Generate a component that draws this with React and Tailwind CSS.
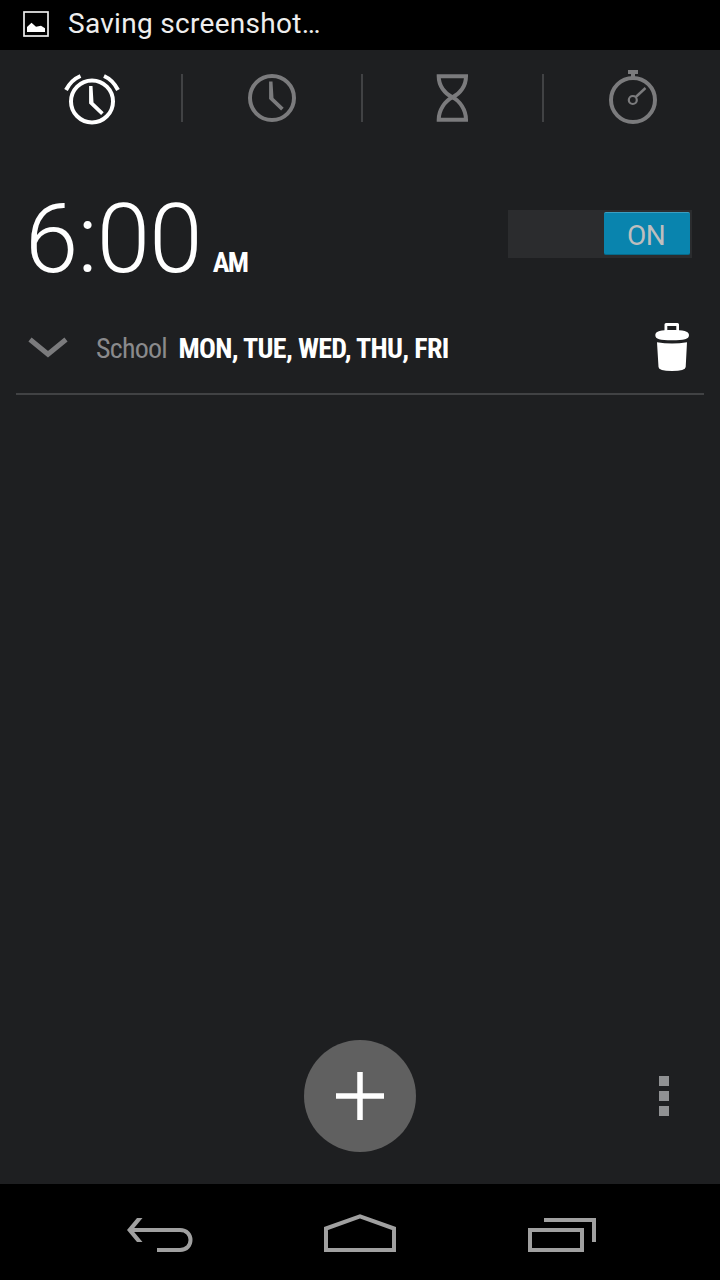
import React from 'react';

function ClockHands({ cx, cy }) {
  return (
    <path d={`M${cx - 2.4} ${cy - 15.5}h3.4l1 16.500 10.200 9.800-2.600 2.600-12-11.400z`} fill="currentColor" stroke="none" />
  );
}

function AlarmIcon() {
  return (
    <svg width="61" height="56" viewBox="60 70 61 56" fill="none" stroke="currentColor" strokeWidth="4">
      <circle cx="92" cy="101.400" r="21" />
      <path d="M66 90Q71 80 80.500 76M118 90Q113 80 104 76" />
      <ClockHands cx={91.5} cy={101.5} />
    </svg>
  );
}

function ClockIcon() {
  return (
    <svg width="50" height="56" viewBox="247 70 50 56" fill="none" stroke="currentColor" strokeWidth="4">
      <circle cx="272" cy="98" r="22" />
      <ClockHands cx={271.5} cy={97} />
    </svg>
  );
}

function HourglassIcon() {
  return (
    <svg width="37" height="56" viewBox="434 70 37 56" fill="none" stroke="currentColor" strokeWidth="4">
      <path d="M438.700 76.200H466C466 86 460 94 452.400 97.300C445 94 438.700 86 438.700 76.200ZM438.700 119.700H466C466 110 460 101 452.400 97.300C445 101 438.700 110 438.700 119.700Z" />
    </svg>
  );
}

function StopwatchIcon() {
  return (
    <svg width="52" height="56" viewBox="606 70 52 56" fill="none" stroke="currentColor" strokeWidth="4">
      <circle cx="633" cy="100" r="22" />
      <path d="M628 70h10v4h-3v3h-4v-3h-3z" fill="currentColor" stroke="none" />
      <circle cx="632.800" cy="100" r="4" strokeWidth="2.200" />
      <path d="M635.800 97L645.500 88" strokeWidth="2.400" />
    </svg>
  );
}

function Tab({ className, children }) {
  return <button className={`flex h-24 items-center justify-center ${className}`}>{children}</button>;
}

function Divider() {
  return <div className="h-12 w-0.5 shrink-0 bg-[#414244]" />;
}

export default function App() {
  return (
    <div className="flex h-[1280px] w-[720px] flex-col overflow-hidden bg-[#1e1f21] font-['Roboto',sans-serif] text-white">
      <header className="flex h-[50px] shrink-0 items-center bg-black pl-[23px]">
        <svg width="26" height="26" viewBox="0 0 26 26" className="mt-[-2px]">
          <rect x="1" y="1" width="24" height="24" fill="none" stroke="#eee" strokeWidth="1.700" />
          <path d="M4 21v-5l4.500-4.300 4.500 4 5-1 4 2.500V21z" fill="#fff" />
        </svg>
        <span className="mt-[-2px] ml-[19px] text-[28px] tracking-[0.3px] whitespace-nowrap text-[#eee]">Saving screenshot…</span>
      </header>

      <nav className="flex h-24 shrink-0 items-center">
        <Tab className="w-[181px] text-white"><AlarmIcon /></Tab>
        <Divider />
        <Tab className="w-[178px] text-[#7b7b7d]"><ClockIcon /></Tab>
        <Divider />
        <Tab className="w-[179px] text-[#7b7b7d]"><HourglassIcon /></Tab>
        <Divider />
        <Tab className="flex-1 text-[#7b7b7d]"><StopwatchIcon /></Tab>
      </nav>

      <main className="flex flex-1 flex-col">
        <section className="mx-4 flex h-[249px] shrink-0 flex-col border-b-2 border-[#414244]">
          <div className="flex h-[154px] items-start justify-between pr-3 pl-[9px]">
            <div className="flex items-baseline pt-[45px]">
              <span className="text-[96px] leading-none font-light tracking-[-0.8px]">6:00</span>
              <span className="ml-[11px] text-[28px] font-bold tracking-[-1.8px] font-stretch-condensed">AM</span>
            </div>
            <button className="mt-16 flex h-12 w-[184px] justify-end bg-[#2b2c2e] pt-0.5 pr-0.5">
              <span className="flex h-[43px] w-[86px] items-center justify-center rounded-xs border-t border-b border-t-[#3b9fc2] border-b-[#066b8b] bg-[#0984ae] pt-[5px] pr-0.5 text-[28px] tracking-[-0.6px] text-[#bebebe]">ON</span>
            </button>
          </div>
          <div className="flex h-[93px] items-center pr-3.5 pl-3">
            <svg width="40" height="24" viewBox="0 0 40 24" fill="none" stroke="#7b7b7d" strokeWidth="5">
              <path d="M2 4.500L20 19.300L38 4.500" />
            </svg>
            <span className="mt-1 ml-7 text-[28px] tracking-[-0.75px] text-[#8a8a8c] font-stretch-condensed">School</span>
            <span className="mt-1 ml-[11.5px] text-[28px] font-bold tracking-[-0.66px] font-stretch-condensed">MON, TUE, WED, THU, FRI</span>
            <svg width="36" height="50" viewBox="654 322 36 50" fill="#fff" className="ml-auto">
              <path fillRule="evenodd" d="M666 323h11.500q1.500 0 1.500 1.500v7.500h-14.500v-7.500q0-1.500 1.500-1.500zM667.300 326v5h9v-5z" />
              <path d="M655.300 335C655.300 331 661 330 672 330S689 331 689 335C689 339.300 684 340.300 672 340.300S655.300 339.300 655.300 335ZM657 342.300Q672 344.800 687 342.300L685.700 367Q685.500 371 672 371T658.500 367Z" />
            </svg>
          </div>
        </section>

        <div className="mt-auto grid h-44 grid-cols-3 items-center">
          <span />
          <button className="flex h-28 w-28 items-center justify-center justify-self-center rounded-full bg-[#606060]">
            <svg width="48" height="48" viewBox="0 0 48 48" stroke="#fff" strokeWidth="5.500">
              <path d="M24 0v48M0 24h48" />
            </svg>
          </button>
          <button className="mr-[51px] flex flex-col gap-[5px] justify-self-end">
            <span className="h-2.5 w-2.5 bg-[#909193]" />
            <span className="h-2.5 w-2.5 bg-[#909193]" />
            <span className="h-2.5 w-2.5 bg-[#909193]" />
          </button>
        </div>
      </main>

      <footer className="flex h-24 shrink-0 items-start bg-black pt-[30px] pl-[126px] text-[#a0a0a0]">
        <svg width="70" height="42" viewBox="126 1214 70 42" fill="none" stroke="currentColor" strokeWidth="4">
          <path d="M132 1230H180C194 1230 194 1250 180 1250H157" />
          <path d="M142.500 1218H137L127 1230L137 1242H142.500L132.500 1230Z" fill="currentColor" stroke="none" />
        </svg>
        <svg width="74" height="42" viewBox="323 1214 74 42" fill="none" stroke="currentColor" strokeWidth="4" className="ml-[127px]">
          <path d="M326 1250V1228.500L360 1216.300L394 1228.500V1250Z" />
        </svg>
        <svg width="70" height="42" viewBox="527 1214 70 42" fill="none" stroke="currentColor" strokeWidth="4" className="ml-[130px]">
          <path d="M530 1230H582V1250H530ZM544 1220H594V1242" />
        </svg>
      </footer>
    </div>
  );
}
